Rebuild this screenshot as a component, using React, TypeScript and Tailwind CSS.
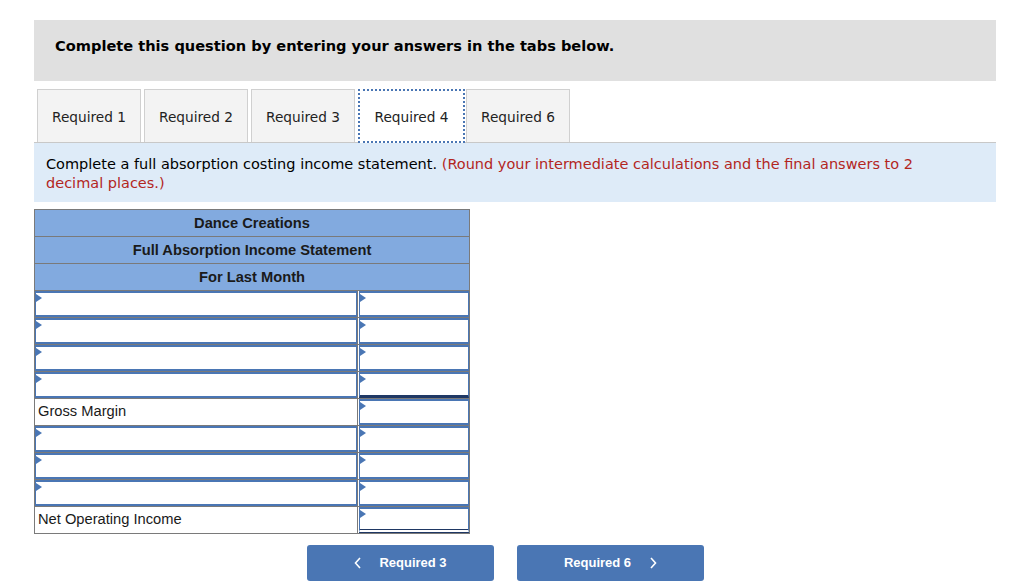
import React from "react";

const verdana = "font-['DejaVu_Sans',Verdana,sans-serif]";

function Tri() {
  return (
    <span className="absolute left-0 top-[1px] w-0 h-0 border-y-[4px] border-y-transparent border-l-[6px] border-l-[#4a76b4]" />
  );
}

function InputCell({ extra = "" }: { extra?: string }) {
  return (
    <div className={`relative h-[26px] bg-white border border-[#4a76b4] border-t-[2px] border-b-[2px] ${extra}`}>
      <Tri />
    </div>
  );
}

type Row = { label?: string; rightExtra?: string };

const rows: Row[] = [
  {},
  {},
  {},
  { rightExtra: "border-b-[3px] border-b-[#1f3864]" },
  { label: "Gross Margin" },
  {},
  {},
  {},
  { label: "Net Operating Income", rightExtra: "border-b-[4px] border-b-[#1f3864] border-double" },
];

export default function App() {
  return (
    <div className="min-h-[585px] w-[1024px] bg-white pt-[20px] pl-[34px]">
      <div className="w-[962px]">
        <div className={`h-[61px] bg-[#e0e0e0] pl-[21px] pt-[16px] leading-[19px] ${verdana} text-[14.6px] font-bold text-black`}>
          Complete this question by entering your answers in the tabs below.
        </div>

        <div className={`mt-[8px] flex items-end pl-[3px] gap-[3px] border-b border-[#c8c8c8] ${verdana} text-[13.7px] text-[#222]`}>
          {["Required 1", "Required 2", "Required 3", "Required 4", "Required 6"].map((t) =>
            t === "Required 4" ? (
              <div
                key={t}
                className="h-[54px] w-[107px] mr-[-2px] flex items-center justify-center pt-[3px] bg-white border-2 border-dotted border-[#4a76b4] -mb-px"
              >
                {t}
              </div>
            ) : (
              <div
                key={t}
                className="h-[53px] w-[104px] flex items-center justify-center pt-[3px] bg-[#f3f3f3] border border-b-0 border-[#d0d0d0]"
              >
                {t}
              </div>
            )
          )}
        </div>

        <div className={`h-[59px] bg-[#deebf8] pl-[12px] pr-[50px] pt-[12px] ${verdana} text-[14.5px] leading-[19px]`}>
          <span className="text-black">Complete a full absorption costing income statement. </span>
          <span className="text-[#b3261e]">
            (Round your intermediate calculations and the final answers to 2 decimal places.)
          </span>
        </div>

        <table className="mt-[7px] border-collapse font-['Liberation_Sans',Arial,sans-serif] text-[14.7px]">
          <tbody>
            {["Dance Creations", "Full Absorption Income Statement", "For Last Month"].map((h) => (
              <tr key={h}>
                <td
                  colSpan={2}
                  className="h-[27px] p-0 bg-[#82aadf] border border-[#7a7a7a] text-center font-bold text-[#1a1a1a]"
                >
                  {h}
                </td>
              </tr>
            ))}
            {rows.map((r, i) => (
              <tr key={i}>
                <td className="w-[323px] h-[27px] p-0 border border-[#7a7a7a] align-top">
                  {r.label ? (
                    <div className="h-[26px] flex items-center pl-[3px] pb-[2px] text-[#1a1a1a] bg-white">{r.label}</div>
                  ) : (
                    <InputCell />
                  )}
                </td>
                <td className="w-[112px] h-[27px] p-0 border border-[#7a7a7a] align-top pl-[1px]">
                  <InputCell extra={r.rightExtra ?? ""} />
                </td>
              </tr>
            ))}
          </tbody>
        </table>

        <div className="mt-[11px] flex gap-[23px] pl-[273px] font-['Liberation_Sans',Arial,sans-serif] text-[13px] font-bold text-white">
          <button className="w-[187px] h-[36px] rounded-[3px] bg-[#4a76b4] flex items-center justify-center gap-[17px]">
            <svg width="8" height="12" viewBox="0 0 8 12" fill="none">
              <path d="M6 1L1.5 6L6 11" stroke="white" strokeWidth="1.6" />
            </svg>
            <span>Required 3</span>
          </button>
          <button className="w-[187px] h-[36px] rounded-[3px] bg-[#4a76b4] flex items-center justify-center gap-[18px]">
            <span>Required 6</span>
            <svg width="8" height="12" viewBox="0 0 8 12" fill="none">
              <path d="M2 1L6.5 6L2 11" stroke="white" strokeWidth="1.6" />
            </svg>
          </button>
        </div>
      </div>
    </div>
  );
}
